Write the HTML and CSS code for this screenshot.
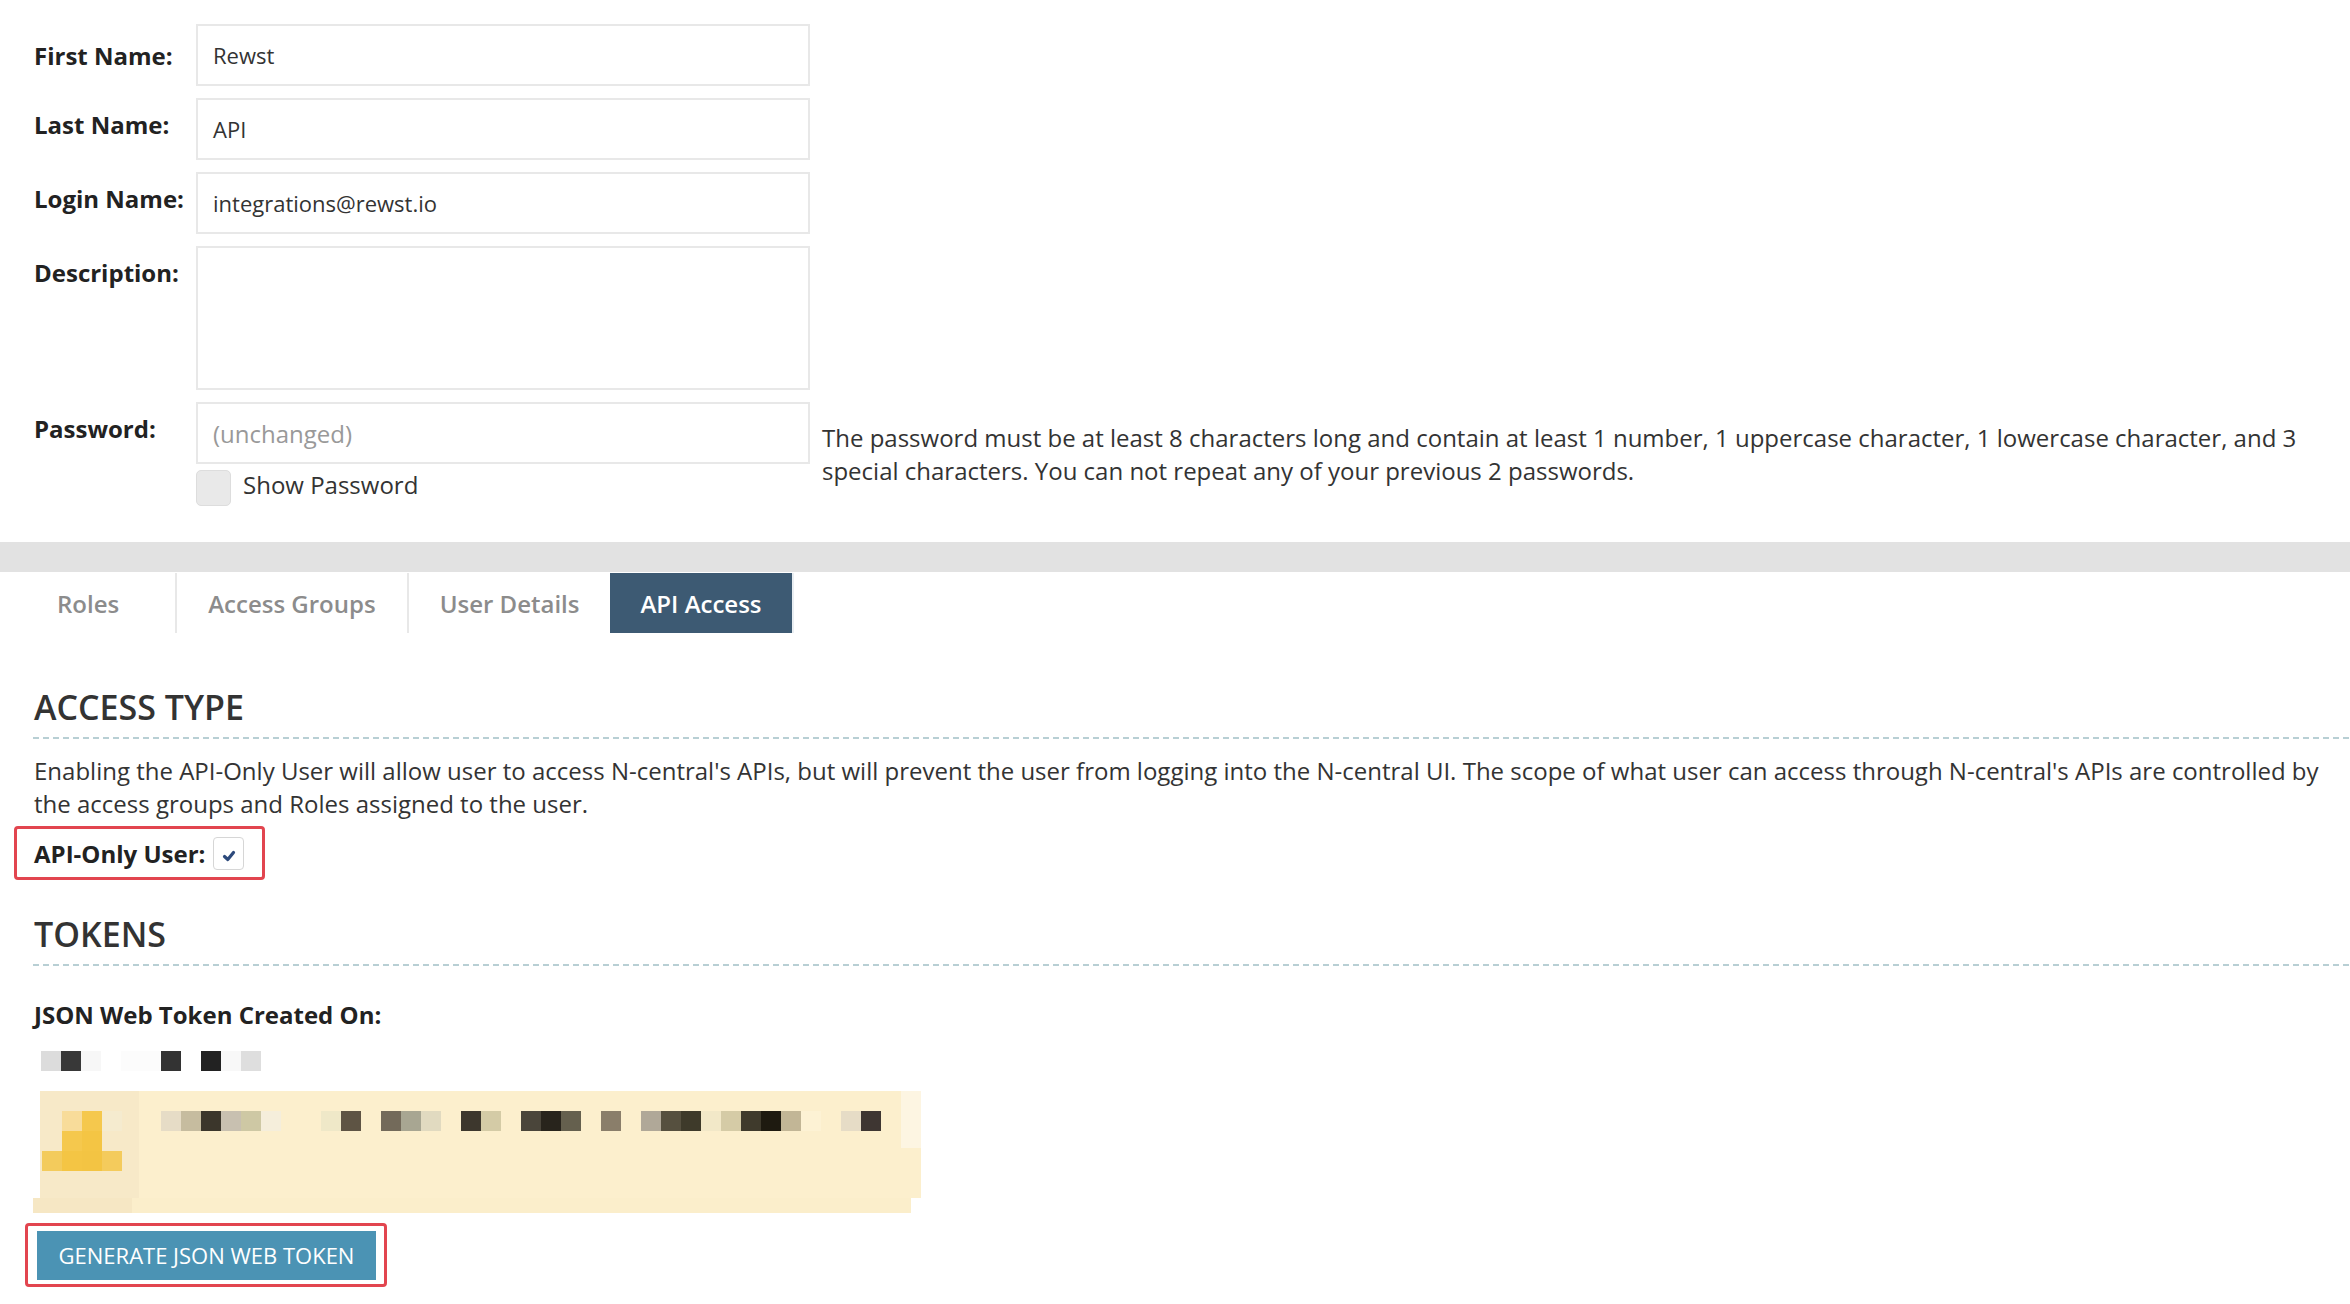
FILE: index.html
```html
<!DOCTYPE html>
<html lang="en">
<head>
<meta charset="utf-8">
<title>User - API Access</title>
<link rel="stylesheet" href="styles.css">
</head>
<body>
<div class="form">
  <label class="lbl lbl-first">First Name:</label>
  <div class="field"><div class="input">Rewst</div></div>
  <div></div>

  <label class="lbl">Last Name:</label>
  <div class="field"><div class="input">API</div></div>
  <div></div>

  <label class="lbl">Login Name:</label>
  <div class="field"><div class="input">integrations@rewst.io</div></div>
  <div></div>

  <label class="lbl">Description:</label>
  <div class="field"><div class="input textarea"></div></div>
  <div></div>

  <label class="lbl">Password:</label>
  <div class="field">
    <div class="input placeholder">(unchanged)</div>
    <div class="show-pw"><span class="cb"></span><span class="show-txt">Show Password</span></div>
  </div>
  <div class="hint">The password must be at least 8 characters long and contain at least 1 number, 1 uppercase character, 1 lowercase character, and 3 special characters. You can not repeat any of your previous 2 passwords.</div>
</div>

<div class="band"></div>

<div class="tabs">
  <div class="tab tab-roles">Roles</div>
  <div class="tab">Access Groups</div>
  <div class="tab tab-nosep">User Details</div>
  <div class="tab active">API Access</div>
</div>

<div class="section">
  <h2 class="sec-title first">ACCESS TYPE</h2>
  <div class="dash"></div>
  <p class="para">Enabling the API-Only User will allow user to access N-central's APIs, but will prevent the user from logging into the N-central UI. The scope of what user can access through N-central's APIs are controlled by the access groups and Roles assigned to the user.</p>
  <div class="api-only">
    <span class="api-lbl">API-Only User:</span>
    <span class="cb-on"><svg width="16" height="14" viewBox="0 0 16 14"><path d="M3.5 7.5 L6.8 10.5 L12.5 3.5" fill="none" stroke="#2d4a7c" stroke-width="3.2" stroke-linecap="round" stroke-linejoin="round"/></svg></span>
  </div>

  <h2 class="sec-title tokens">TOKENS</h2>
  <div class="dash"></div>

  <div class="jwt-lbl">JSON Web Token Created On:</div>
  <div class="mosaic date">
    <i style="background:#dcdcdc"></i><i style="background:#383838"></i><i style="background:#f7f7f7"></i><i style="background:#ffffff"></i><i style="background:#fcfcfc"></i><i style="background:#fcfcfc"></i><i style="background:#333333"></i><i style="background:#ffffff"></i><i style="background:#222222"></i><i style="background:#f8f8f8"></i><i style="background:#dedede"></i>
  </div>

  <div class="token-box">
    <div class="token-main">
      <div class="icon-col">
        <div class="mosaic"><i></i><i style="background:#f8dc9a"></i><i style="background:#f5c84d"></i><i style="background:#f5ebcf"></i></div>
        <div class="mosaic"><i></i><i style="background:#f5c84d"></i><i style="background:#f4c544"></i><i></i></div>
        <div class="mosaic"><i style="background:#f3cb5c"></i><i style="background:#f4c544"></i><i style="background:#f3c443"></i><i style="background:#f4cb5c"></i></div>
      </div>
      <div class="mosaic token-text">
        <i style="background:#e6dcc6"></i><i style="background:#c6bc9f"></i><i style="background:#3b362b"></i><i style="background:#c8c0b0"></i><i style="background:#cec8a4"></i><i style="background:#f5eedb"></i><i></i><i></i><i style="background:#efe8c8"></i><i style="background:#5e5444"></i><i></i><i style="background:#736a5a"></i><i style="background:#a8a692"></i><i style="background:#e1dac0"></i><i></i><i style="background:#3d372d"></i><i style="background:#d4cba6"></i><i></i><i style="background:#4a453a"></i><i style="background:#28241c"></i><i style="background:#65604e"></i><i></i><i style="background:#8a7e6a"></i><i></i><i style="background:#b0a898"></i><i style="background:#56503f"></i><i style="background:#3e3a2a"></i><i style="background:#f2e8c8"></i><i style="background:#d5cba6"></i><i style="background:#3f3a2c"></i><i style="background:#1e1a10"></i><i style="background:#c2b696"></i><i style="background:#fdf2d4"></i><i></i><i style="background:#e6dcc6"></i><i style="background:#3e3632"></i>
      </div>
      <div class="token-edge"></div>
    </div>
    <div class="token-foot"><span class="foot-left"></span></div>
  </div>

  <div class="btn-wrap"><button class="btn">GENERATE JSON WEB TOKEN</button></div>
</div>
</body>
</html>
```

FILE: styles.css
```css
* { box-sizing: border-box; }
html, body { margin: 0; padding: 0; background: #ffffff; }
body {
  font-family: "Open Sans", "Noto Sans", "Liberation Sans", sans-serif;
  color: #333333;
  font-size: 24px;
  line-height: 33px;
  width: 2350px;
  overflow: hidden;
}

/* ---------- form ---------- */
.form {
  display: grid;
  grid-template-columns: 162px 614px 1fr;
  row-gap: 12px;
  padding: 24px 28px 0 34px;
}
.lbl {
  font-weight: 700;
  font-size: 24px;
  color: #222222;
  padding-top: 10px;
  line-height: 33px;
}
.lbl-first { padding-top: 15px; }
.input {
  height: 62px;
  border: 2px solid #e8e8e8;
  padding: 0 15px;
  font-size: 22px;
  color: #333333;
  display: flex;
  align-items: center;
}
.input.textarea { height: 144px; }
.input.placeholder { color: #999999; font-size: 24px; }
.show-pw {
  display: flex;
  align-items: center;
  gap: 12px;
  margin-top: 6px;
  font-size: 24px;
  color: #333333;
}
.show-txt { margin-top: -7px; }
.cb {
  width: 35px;
  height: 36px;
  border-radius: 5px;
  background: #e9e9e9;
  border: 1px solid #dddddd;
}
.hint {
  padding: 19px 0 0 12px;
  font-size: 24px;
  line-height: 33px;
  color: #333333;
}

/* ---------- band & tabs ---------- */
.band {
  height: 30px;
  background: #e2e2e2;
  margin-top: 36px;
}
.tabs {
  display: flex;
  height: 60px;
  margin-top: 1px;
  padding-left: 25px;
}
.tab {
  display: flex;
  align-items: center;
  padding: 0 31px;
  font-size: 24px;
  font-weight: 600;
  color: #8c8c8c;
  border-right: 2px solid #e8e8e8;
}
.tab-roles { padding-left: 32px; padding-right: 56px; }
.tab-nosep { border-right: none; }
.tab.active {
  background: #3d5a73;
  color: #ffffff;
  padding: 0 30px;
  border-right: 2px solid #e9eef2;
}

/* ---------- sections ---------- */
.section { padding: 0 0 0 34px; }
.sec-title {
  margin: 0;
  font-size: 34px;
  line-height: 44px;
  font-weight: 600;
  color: #333333;
  padding-bottom: 8px;
}
.sec-title.first { margin-top: 52px; }
.sec-title.tokens { margin-top: 32px; }
.dash {
  height: 2px;
  margin-left: -1px;
  background: repeating-linear-gradient(to right, #b8cfd4 0 6px, transparent 6px 10px);
}
.para {
  margin: 15px 18px 0 0;
  font-size: 24px;
  line-height: 33px;
}
.api-only {
  display: inline-flex;
  align-items: center;
  margin: 6px 0 0 -20px;
  height: 54px;
  padding: 0 18px 0 17px;
  border: 3px solid #e2454f;
  border-radius: 4px;
  gap: 8px;
}
.api-lbl { font-weight: 700; font-size: 24px; color: #222222; }
.cb-on {
  width: 31px;
  height: 33px;
  border: 1px solid #d6d6d6;
  border-radius: 4px;
  background: #ffffff;
  display: flex;
  align-items: center;
  justify-content: center;
  padding-top: 5px;
}

.jwt-lbl {
  margin-top: 32px;
  font-weight: 700;
  font-size: 24px;
  color: #222222;
}

.mosaic { display: flex; }
.mosaic i { display: block; width: 20px; height: 20px; flex: none; }
.date { margin: 19.5px 0 0 7px; }

.token-box { margin: 20px 0 0 0; width: 888px; }
.token-main {
  display: flex;
  margin-left: 6px;
  width: 881px;
  height: 107px;
  background: #fcefcd;
}
.icon-col {
  width: 99px;
  background: #f7e9c8;
  padding: 20px 0 0 2px;
}
.token-text { margin: 20px 0 0 22px; }
.token-edge {
  margin-left: auto;
  width: 20px;
  height: 57px;
  background: #fdf5e2;
}
.token-foot {
  display: flex;
  height: 15px;
  width: 878px;
  margin-left: -1px;
  background: #fbeecb;
}
.foot-left { width: 99px; background: #f6e7c4; }

.btn-wrap {
  display: inline-block;
  margin: 10px 0 0 -9px;
  border: 3px solid #e2454f;
  border-radius: 4px;
  padding: 4px 7px 3px 8px;
}
.btn {
  display: block;
  height: 51px;
  width: 341px;
  border: 1px solid #ffffff;
  background: #4b93b4;
  color: #ffffff;
  font-family: "Open Sans", "Noto Sans", sans-serif;
  font-size: 22px;
  padding: 0;
}
```
